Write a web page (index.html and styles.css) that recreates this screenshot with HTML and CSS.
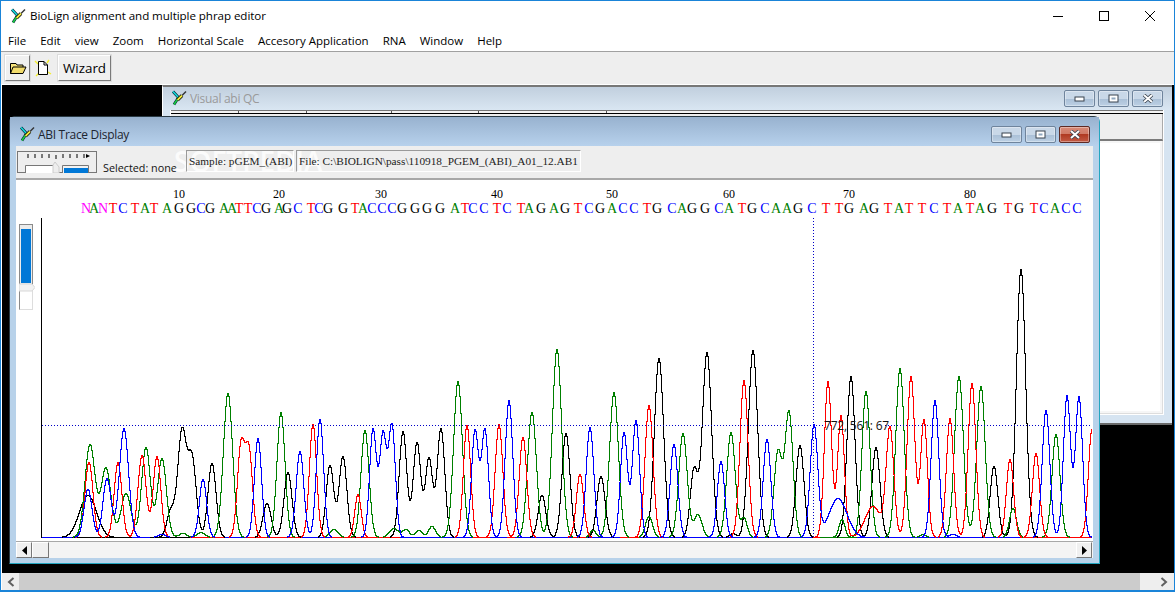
FILE: index.html
```html
<!DOCTYPE html>
<html lang="en">
<head>
<meta charset="utf-8">
<title>BioLign alignment and multiple phrap editor</title>
<link rel="stylesheet" href="styles.css">
</head>
<body>
<svg class="defs" width="0" height="0" aria-hidden="true">
  <symbol id="appicon" viewBox="0 0 16 16">
    <path d="M2 1.5 7.5 7.5 3 14.5" fill="none" stroke="#0a2a3a" stroke-width="2.8"/>
    <path d="M2 1.5 7.5 7.5" fill="none" stroke="#12e0e0" stroke-width="1.5"/>
    <path d="M7.5 7.5 3 14.5" fill="none" stroke="#18d040" stroke-width="1.5"/>
    <path d="M6.5 10 11 5.5" fill="none" stroke="#000" stroke-width="3.4"/>
    <path d="M11 5.5 15 1.5" fill="none" stroke="#333" stroke-width="1.4"/>
    <path d="M6.5 10 11 5.5" fill="none" stroke="#f0e83a" stroke-width="1.8"/>
  </symbol>
  <symbol id="min" viewBox="0 0 11 7"><rect x="1" y="2" width="9" height="4" fill="#fff" stroke="#39424e"/></symbol>
  <symbol id="res" viewBox="0 0 11 9"><rect x="1" y="1" width="9" height="7" fill="#fff" stroke="#39424e"/><rect x="3.5" y="3.5" width="4" height="2" fill="#8fa7bf"/></symbol>
  <symbol id="cls" viewBox="0 0 12 9"><path d="M2 1 10 8M10 1 2 8" stroke="#39424e" stroke-width="3.6"/><path d="M2 1 10 8M10 1 2 8" stroke="#fff" stroke-width="2"/></symbol>
</svg>
<div class="app">
  <header class="titlebar">
    <svg class="appicon"><use href="#appicon"/></svg>
    <span class="apptitle">BioLign alignment and multiple phrap editor</span>
    <div class="caption">
      <svg width="46" height="30" viewBox="0 0 46 30"><path d="M18 15.5H28" stroke="#000"/></svg>
      <svg width="46" height="30" viewBox="0 0 46 30"><rect x="18.5" y="10.5" width="9" height="9" fill="none" stroke="#000"/></svg>
      <svg width="46" height="30" viewBox="0 0 46 30"><path d="M18 10 28 20M28 10 18 20" stroke="#000" fill="none"/></svg>
    </div>
  </header>
  <nav class="menubar">
    <span>File</span><span>Edit</span><span>view</span><span>Zoom</span><span>Horizontal Scale</span><span>Accesory Application</span><span>RNA</span><span>Window</span><span>Help</span>
  </nav>
  <div class="toolbar">
    <button class="tool icon-tool">
      <svg width="18" height="14" viewBox="0 0 18 14"><path d="M1.5 12.5V2.5H7L8 4H14V6" fill="#f5e27a" stroke="#000"/><path d="M1.5 12.5 4 6H17L14 12.5Z" fill="#f2dc6c" stroke="#000"/></svg>
    </button>
    <span class="newdoc">
      <svg width="18" height="20" viewBox="0 0 18 20"><path d="M1 3 4 6M15 2 13 5M17 16 14 14M2 18 5 15" stroke="#f3ee2e" stroke-width="1.4"/><path d="M4.5 3.5H10L13.5 7V16.5H4.5Z" fill="#fff" stroke="#000"/><path d="M10 3.5V7H13.5" fill="none" stroke="#000"/></svg>
    </span>
    <button class="tool wizard">Wizard</button>
  </div>
  <main class="desktop">
    <section class="win back">
      <div class="wintitle">
        <svg class="appicon"><use href="#appicon"/></svg>
        <span class="wtext">Visual abi QC</span>
        <div class="wbtns">
          <span class="wbtn"><svg width="11" height="7"><use href="#min"/></svg></span>
          <span class="wbtn"><svg width="11" height="9"><use href="#res"/></svg></span>
          <span class="wbtn"><svg width="12" height="9"><use href="#cls"/></svg></span>
        </div>
      </div>
      <div class="backbody">
        <div class="backhead"><i></i><i></i><i></i><i></i><i></i><i></i></div>
        <div class="backtool"></div>
        <div class="backwhite"></div>
      </div>
    </section>
    <section class="win front">
      <div class="wintitle">
        <svg class="appicon"><use href="#appicon"/></svg>
        <span class="wtext">ABI Trace Display</span>
        <div class="wbtns">
          <span class="wbtn"><svg width="11" height="7"><use href="#min"/></svg></span>
          <span class="wbtn"><svg width="11" height="9"><use href="#res"/></svg></span>
          <span class="wbtn close"><svg width="12" height="9"><use href="#cls"/></svg></span>
        </div>
      </div>
      <div class="frontbody">
        <div class="tracetool">
          <span class="watermark">SOFTPEDIA</span>
          <svg class="track" width="80" height="22" viewBox="0 0 80 22">
            <rect x=".5" y=".5" width="79" height="21" fill="none" stroke="#000" stroke-dasharray="1 1"/>
            <path d="M11 3V7M18 3V7M25 3V7M32 3V7M39 4V8M46 3V7M53 3V7M60 3V7M67 3V7" stroke="#000"/>
            <path d="M69 3 73 5 69 7Z" fill="#000"/>
            <path d="M8.5 22V14.5H36.5V22" fill="#fff" stroke="#777"/>
            <path d="M45.5 22V14.5H71.5V22" fill="#f2f2f2" stroke="#777"/>
            <rect x="47" y="17" width="24" height="5" fill="#0078d7"/>
            <path d="M38 11 42 16V22H36V14Z" fill="#eee" stroke="#ccc"/>
          </svg>
          <span class="selected">Selected: none</span>
          <span class="pane sample">Sample: pGEM_(ABI)</span>
          <span class="pane file">File: C:\BIOLIGN\pass\110918_PGEM_(ABI)_A01_12.AB1</span>
        </div>
        <div class="plot">
          <div class="rail">
            <svg width="16" height="86" viewBox="0 0 16 86">
              <rect x=".5" y=".5" width="13" height="60" fill="#ececec" stroke="#8a8a8a"/>
              <rect x="2" y="5" width="10" height="54" fill="#0078d7"/>
              <rect x=".5" y="66.5" width="13" height="19" fill="#fff" stroke="#ddd"/>
              <path d="M.5 66.5V85.5" stroke="#8a8a8a"/>
              <path d="M0 60H13L16 63.5 13 67H0Z" fill="#f2f2f2" stroke="#d8d8d8"/>
            </svg>
          </div>
          <svg id="trace" class="trace" viewBox="41 180 1051 360" width="1051" height="360"></svg>
        </div>
        <div class="hscroll">
          <button class="sbtn"><svg width="7" height="9" viewBox="0 0 7 9"><path d="M6 0V9L1 4.5Z" fill="#000"/></svg></button>
          <button class="sbtn thumb"></button>
          <div class="strack"></div>
          <button class="sbtn"><svg width="7" height="9" viewBox="0 0 7 9"><path d="M1 0V9L6 4.5Z" fill="#000"/></svg></button>
        </div>
      </div>
    </section>
  </main>
  <div class="mainscroll">
    <span class="mbtn left"><svg width="8" height="10" viewBox="0 0 8 10"><path d="M6.5 1 2 5 6.5 9" fill="none" stroke="#606060" stroke-width="2"/></svg></span>
    <span class="mthumb"></span>
    <span class="mbtn right"><svg width="8" height="10" viewBox="0 0 8 10"><path d="M1.5 1 6 5 1.5 9" fill="none" stroke="#606060" stroke-width="2"/></svg></span>
  </div>
</div>
<script src="trace.js"></script>
</body>
</html>
```

FILE: styles.css
```css
* { box-sizing: border-box; }
html, body { margin: 0; padding: 0; }
body { width: 1175px; height: 592px; overflow: hidden; font-family: "Open Sans", "Noto Sans", sans-serif; font-size: 12px; color: #000; background: #fff; }
.defs { position: absolute; }
.app { width: 1175px; height: 592px; display: flex; flex-direction: column; border: 1px solid #1a84d8; border-bottom-width: 2px; background: #fff; }

.titlebar { height: 29px; flex: none; display: flex; align-items: center; padding-left: 9px; background: #fff; }
.appicon { width: 16px; height: 16px; flex: none; }
.apptitle { margin-left: 4px; font-size: 11.6px; letter-spacing: -.07px; }
.caption { margin-left: auto; display: flex; padding-right: 1px; }
.caption svg { display: block; }

.menubar { height: 21px; flex: none; display: flex; align-items: center; padding-left: 7px; background: #fff; font-size: 11.5px; border-bottom: 1px solid #fff; }
.menubar span { margin-right: 14px; white-space: nowrap; }

.toolbar { height: 34px; flex: none; display: flex; align-items: center; gap: 4px; padding: 0 0 0 4px; background: #eee; border-top: 1px solid #a0a0a0; border-bottom: 1px solid #fff; }
.tool { height: 26px; padding: 0; background: #f0f0f0; border: 1px solid; border-color: #fff #7a7a7a #7a7a7a #fff; box-shadow: 0 0 0 1px #dcdcdc; font: inherit; display: flex; align-items: center; justify-content: center; }
.icon-tool { width: 25px; }
.newdoc { width: 18px; height: 22px; display: flex; align-items: center; }
.wizard { width: 53px; margin-left: 2px; font-size: 13.4px; }

.desktop { position: relative; flex: 1; min-height: 0; background: #000; margin: 0 0 0 1px; }
.win { position: absolute; display: flex; flex-direction: column; }
.wintitle { flex: none; display: flex; align-items: center; }
.wtext { margin-left: 3px; font-size: 12px; letter-spacing: -.3px; }
.wbtns { margin-left: auto; display: flex; gap: 3px; }
.wbtn { width: 31px; height: 17px; border: 1px solid #6f849c; border-radius: 2px; background: linear-gradient(#c9d8e8 0, #c9d8e8 50%, #a9bfd6 50%, #bcd0e4 100%); display: flex; align-items: center; justify-content: center; box-shadow: inset 0 0 0 1px rgba(255,255,255,.35); }
.wbtn.close { background: linear-gradient(#d88a78 0, #d07a66 45%, #b03a22 50%, #c25a44 100%); border-color: #5e2a24; }

.back { left: 160px; top: 0; width: 1010px; height: 340px; background: #d6e4f1; border-top: 2px solid #777; border-left: 1px solid #fff; border-bottom: 2px solid #6a6a6a; }
.back .wintitle { height: 23px; padding: 0 9px 1px 8px; background: linear-gradient(#c1cfde, #d9e6f2); }
.back .wtext { color: #9a9a9a; }
.backbody { flex: 1; margin: 0 8px 8px 7px; display: flex; flex-direction: column; border: 1px solid #fff; border-top: 0; }
.backhead { height: 4px; flex: none; display: flex; background: #f4f4f4; border-top: 1px solid #777; border-bottom: 1px solid #000; }
.backhead i { width: 68px; flex: none; border-right: 1px solid #555; }
.backhead i:nth-child(3) { width: 85px; }
.backhead i:nth-child(4) { width: 87px; }
.backhead i:nth-child(5) { width: 128px; }
.backhead i:last-child { flex: 1; border-right: 0; }
.backtool { height: 27px; background: #eee; border-right: 1px solid #aaa; border-bottom: 2px solid #7a7a7a; }
.backwhite { flex: 1; background: #fff; border: 1px solid #ddd; border-top: 0; box-shadow: inset 0 0 0 2px #f6f6f6; }

.front { left: 7px; top: 31px; width: 1091px; height: 448px; border: 1px solid #2a3a44; border-right-color: #24a6c0; border-bottom-color: #24a6c0; border-radius: 6px 6px 0 0; background: #b8d2ea; }
.front .wintitle { height: 29px; padding: 5px 9px 0 9px; background: linear-gradient(#98b2cf, #b7d1ec); }
.front .wtext { color: #1d2530; margin-left: 3px; }
.frontbody { flex: 1; margin: 0 6px 5px 6px; display: flex; flex-direction: column; min-height: 0; background: #fff; }

.tracetool { position: relative; height: 34px; flex: none; display: flex; align-items: center; background: #eee; border-bottom: 2px solid #a8a8a8; padding: 3px 0 0 1px; }
.track { flex: none; margin-top: -3px; }
.selected { margin-left: 6px; margin-top: 8px; width: 83px; font-size: 10.8px; white-space: nowrap; color: #111; }
.pane { position: relative; z-index: 1; height: 22px; margin-top: -5px; display: flex; align-items: center; padding-left: 2px; font-family: "Liberation Serif", serif; font-size: 11.3px; color: #222; white-space: nowrap; border: 1px solid; border-color: #9a9a9a #fff #fff #9a9a9a; }
.sample { width: 108px; }
.file { width: 285px; margin-left: 2px; }
.watermark { position: absolute; left: 158px; top: -4px; font-size: 28px; font-weight: 600; color: rgba(255,255,255,.8); pointer-events: none; }

.plot { flex: 1; min-height: 0; display: flex; background: #fff; }
.rail { width: 25px; flex: none; padding: 44px 0 0 3px; }
.rail svg { display: block; }
.trace { display: block; flex: none; font-family: "Liberation Serif", serif; }
.trace path.seg { fill: none; shape-rendering: crispEdges; }
.num { font-size: 12px; text-anchor: middle; fill: #000; }
.base { font-size: 14px; text-anchor: middle; }
.readout { font-family: "Open Sans", sans-serif; font-size: 12px; letter-spacing: -.2px; fill: #111; }

.hscroll { height: 17px; flex: none; display: flex; border-top: 1px solid #a8a8a8; background: #f4f4f4; padding: 0 1px 0 0; align-items: flex-start; }
.sbtn { width: 16px; height: 16px; padding: 0; background: #f0f0f0; border: 1px solid; border-color: #fff #777 #777 #fff; display: flex; align-items: center; justify-content: center; flex: none; }
.thumb { width: 17px; }
.strack { flex: 1; }

.mainscroll { height: 17px; flex: none; display: flex; background: #ccc; margin: 0 0 0 1px; }
.mbtn { flex: none; display: flex; align-items: center; justify-content: center; background: #eee; }
.mbtn.left { width: 17px; }
.mbtn.right { width: 34px; justify-content: flex-end; padding-right: 6px; }
.mthumb { flex: 1; background: #ccc; }
```

FILE: trace.js
```js
var NS = "http://www.w3.org/2000/svg";
var svg = document.getElementById("trace");
var BASE = 537, X0 = 42, X1 = 1091;
var COL = { k: "#000000", g: "#008000", r: "#ff0000", b: "#0000ff", m: "#ff00ff" };

function el(name, attrs, text) {
  var e = document.createElementNS(NS, name);
  for (var k in attrs) e.setAttribute(k, attrs[k]);
  if (text !== undefined) e.textContent = text;
  svg.appendChild(e);
  return e;
}

/* peaks: [centre x, top y, sigma (default 3.9)] */
var PEAKS = {
  k: [[87,495,8.5],[170,510,4],[181,432,4.2],[191,458,4.2],[211,463,4],[266,503,4],[287,472,4],[329,465,3.8],[342,456,3.8],
      [402,431,3.8],[416,442,3.8],[428,458,3.6],[440,428,3.8],[541,495,3.8],[565,433,4],[600,476,4],[658,358,4.6],[693,470,3.8],[706,352,4.6],[752,350,4.6],[732,533,3],[799,445,4],
      [850,376,4],[875,447,4],[993,466,3.8],[1020,269,4.6]],
  g: [[89,444,5],[105,468,5],[125,493,5],[145,447,4.4],[161,458,4.4],[227,393,4.6],[280,412,4],[182,533,4],[200,532,4],[333,529,4],[393,528,4.4],
      [364,430,4],[405,529,3.5],[418,530,3.5],[431,526,3.5],[457,381,4.4],[531,412,4.4],[556,349,4.6],[592,530,3],[613,392,4.4],[648,516,3.5],[682,433,4.2],[697,514,4],[730,432,4.2],[743,518,3.2],[777,452,4],[788,412,4],
      [841,519,3],[865,391,4],[899,368,4.2],[958,376,4.4],[980,386,4.2],[1012,508,3.5],[1055,434,4],[922,534,3]],
  r: [[88,462,4],[117,462,3.8],[141,455,4],[156,456,3.8],[240,446,3.6],[248,452,3.6],[312,424,3.6],[357,494,3.2],
      [466,425,3.6],[498,424,3.8],[522,437,3.8],[579,474,3.6],[648,405,4],[743,380,4],[827,381,3.6],[840,415,3.4],[872,506,8],[889,429,3.8],[910,376,3.8],[923,419,3.4],[949,418,3.6],[971,383,3.8],[1009,459,3.6],[1035,453,3.6],[1091,429,3.6]],
  b: [[87,489,4],[106,478,4],[123,428,4.6],[161,534,4],[202,479,3.6],[257,438,3.6],[299,451,3.8],[319,419,3.6],[372,429,3.4],[382,435,3.4],[391,426,3.4],
      [474,431,3.5],[484,430,3.5],[508,400,3.8],[589,427,3.8],[623,432,3.5],[635,420,3.6],[673,444,3.8],[720,461,3.6],[766,439,3.8],
      [813,425,3.8],[837,498,9],[934,400,3.8],[952,534,3.5],[1045,410,3.8],[1066,396,3.6],[1078,397,3.6]]
};

function traceY(peaks, x) {
  var h = 0;
  for (var i = 0; i < peaks.length; i++) {
    var p = peaks[i], s = p[2] || 3.9, d = x - p[0];
    h += (BASE - p[1]) * Math.exp(-d * d / (2 * s * s));
  }
  return Math.round(Math.max(BASE - h, 180));
}

/* baseline, then each channel drawn only where it rises above it */
var BASESEG = [["b",42,72],["k",72,132],["b",132,150],["k",150,190],["r",190,225],["b",225,245],["r",245,300],["b",300,330],["r",330,400],["b",400,473],["r",473,490],["b",490,507],["r",507,515],["b",515,573],["r",573,587],["b",587,620],["r",620,640],["b",640,813],["r",813,820],["g",820,857],["b",857,1020],["r",1020,1091]];
BASESEG.forEach(function (s) {
  el("path", { "class": "seg", d: "M" + s[1] + " " + (BASE + .5) + "H" + s[2], stroke: COL[s[0]] });
});

["k", "g", "r", "b"].forEach(function (c) {
  var d = "", open = false;
  for (var x = X0; x <= X1; x++) {
    var y = traceY(PEAKS[c], x);
    if (y < BASE) {
      if (!open) { d += "M" + (x + .5) + " " + (BASE + .5); open = true; }
      d += "V" + (y + .5) + "H" + (x + 1.5);
    } else if (open) {
      d += "V" + (BASE + .5);
      open = false;
    }
  }
  el("path", { "class": "seg", d: d, stroke: COL[c] });
});

/* axis and cursor; the horizontal cursor line stops at the readout */
el("path", { d: "M41.5 218V538", stroke: "#000", fill: "none" });
el("path", { d: "M42 425.5H823M885 425.5H1092", stroke: "#0000c8", "stroke-dasharray": "1 2", fill: "none" });
el("path", { d: "M813.5 218V538", stroke: "#0000c8", "stroke-dasharray": "1 2", fill: "none" });
el("text", { "class": "readout", x: 824, y: 430 }, "772, 561: 67");

/* position numbers */
[[10,179],[20,279],[30,381],[40,497],[50,612],[60,729],[70,849],[80,970]].forEach(function (n) {
  el("text", { "class": "num", x: n[1], y: 198 }, String(n[0]));
});

/* called bases */
var SEQ = [["N",86,"m"],["A",94],["N",103,"m"],["T",113],["C",123],["T",135],["A",145],["T",154],["A",167],["G",179],["G",191],["C",201],["G",210],["A",224],["A",232],["T",239],["T",248],["C",257],["G",266],["A",279],["G",287],["C",298],["T",311],["C",319],["G",328],["G",343],["T",355],["A",363],["C",372],["C",382],["C",392],["G",402],["G",415],
["G",427],["G",440],["A",455],["T",465],["C",473],["C",484],["T",497],["C",507],["T",521],["A",529],["G",541],["A",554],["G",565],["T",578],["C",589],["G",600],["A",612],["C",623],["C",634],["T",647],["G",657],["C",672],["A",682],["G",692],["G",705],["C",719],["A",729],["T",742],["G",752],["C",765],["A",776],["A",787],["G",798],["C",812],["T",826],["T",839],["G",849],["A",864],["G",874],["T",888],["A",899],["T",909],["T",922],["C",934],["T",947],["A",958],["T",970],["A",980],["G",992],["T",1008],["G",1019],["T",1034],["C",1044],["A",1055],["C",1066],["C",1077]];
var LC = { A: "g", C: "b", G: "k", T: "r" };
SEQ.forEach(function (s) {
  el("text", { "class": "base", x: s[1], y: 213, fill: COL[s[2] || LC[s[0]]] }, s[0]);
});
```
